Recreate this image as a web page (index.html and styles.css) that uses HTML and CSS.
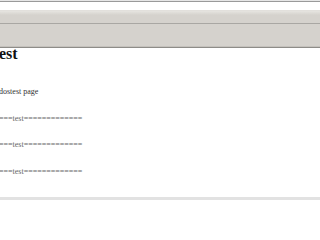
FILE: index.html
```html
<!DOCTYPE html>
<html>
<head>
<meta charset="utf-8">
<link rel="stylesheet" href="styles.css">
</head>
<body>
<div class="page">
  <div class="frame-top"></div>
  <div class="toolbar">
    <div class="tb-row tb-upper"></div>
    <div class="tb-row tb-lower"></div>
  </div>
  <div class="content">
    <h1 class="title">est</h1>
    <p class="intro">dostest page</p>
    <p class="rule">===test=============</p>
    <p class="rule">===test=============</p>
    <p class="rule">===test=============</p>
  </div>
  <div class="footer"></div>
</div>
</body>
</html>
```
FILE: styles.css
```css
html, body {
  margin: 0;
  padding: 0;
  background: #fff;
}
.page {
  display: flex;
  flex-direction: column;
  height: 200px;
  overflow: hidden;
  font-family: "Liberation Serif", "Times New Roman", serif;
  color: #111;
}
.frame-top {
  height: 10px;
  border-top: 1px solid #e6e6e6;
  box-sizing: border-box;
  background: linear-gradient(#fff 0, #fff 0) ;
  position: relative;
}
.frame-top::after {
  content: "";
  display: block;
  height: 1px;
  background: #9a9a9a;
}
.toolbar {
  height: 38px;
  background: #d5d2cd;
  display: flex;
  flex-direction: column;
  border-bottom: 1px solid #8e8c88;
  box-sizing: border-box;
}
.tb-upper {
  height: 12px;
  border-top: 1px solid #e2e0dc;
  border-bottom: 1px solid #a9a7a3;
  background: linear-gradient(#e6e4e0, #d5d2cd 4px);
}
.tb-lower {
  flex: 1;
  border-bottom: 1px solid #c4c1bc;
}
.content {
  display: flex;
  flex-direction: column;
  margin-left: -1px;
}
.title {
  margin: 0;
  font-size: 16px;
  line-height: 12px;
  font-weight: bold;
  color: #111;
}
.intro {
  margin: 27px 0 0 0;
  font-size: 8px;
  line-height: 10px;
  color: #333;
}
.rule {
  margin: 16.5px 0 0 0;
  font-size: 8px;
  line-height: 10px;
  color: #666;
}
.footer {
  margin-top: auto;
  height: 3px;
  background: #e2e2e2;
}
```
